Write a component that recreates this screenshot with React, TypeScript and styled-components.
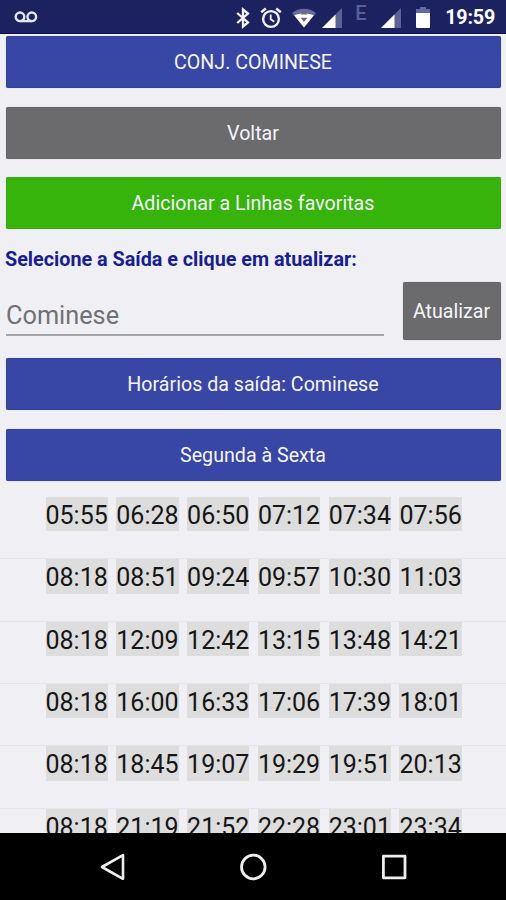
import React from 'react';
import styled, { createGlobalStyle } from 'styled-components';

const DEPARTURES = [
  ['05:55', '06:28', '06:50', '07:12', '07:34', '07:56'],
  ['08:18', '08:51', '09:24', '09:57', '10:30', '11:03'],
  ['08:18', '12:09', '12:42', '13:15', '13:48', '14:21'],
  ['08:18', '16:00', '16:33', '17:06', '17:39', '18:01'],
  ['08:18', '18:45', '19:07', '19:29', '19:51', '20:13'],
  ['08:18', '21:19', '21:52', '22:28', '23:01', '23:34'],
];

const VoicemailIcon = () => (
  <svg width="24" height="12" viewBox="0 0 24 12" fill="none" stroke="#e4e6f6" strokeWidth="2.4">
    <circle cx="6" cy="5.8" r="4.3" />
    <circle cx="17.8" cy="5.8" r="4.3" />
    <path d="M6 10.1H17.8" />
  </svg>
);

const BluetoothIcon = () => (
  <svg width="14" height="22" viewBox="0 0 14 22" fill="none" stroke="#f0f1fb" strokeWidth="2.3">
    <path d="M1.2 6L12 15.5L7 19.5V2.5L12 6.5L1.2 16" />
  </svg>
);

const AlarmIcon = () => (
  <svg width="22" height="22" viewBox="0 0 22 22" fill="none" stroke="#f0f1fb" strokeWidth="2.4">
    <circle cx="11" cy="12" r="7.9" />
    <path d="M1.2 5.3L5.8 1.5M20.8 5.3L16.2 1.5" />
    <path d="M10.7 7.5V12.3L14.3 14.8" strokeWidth="1.8" />
  </svg>
);

const WifiIcon = () => (
  <svg width="26" height="20" viewBox="0 0 26 20">
    <path d="M1 5.2C8 -0.6 18 -0.6 25 5.2L13 19.5Z" fill="#666b9d" />
    <path d="M3.2 7.2C9.5 4.9 16.5 4.9 22.8 7.2L13 19.5Z" fill="#fff" />
    <path d="M13 2.4L16.4 6.6H9.6ZM9.6 9.8H16.4L13 14Z" fill="#666b78" />
  </svg>
);

const SignalIcon = () => (
  <svg width="20" height="20" viewBox="0 0 20 20">
    <path d="M20 0V20H0Z" fill="#5c6297" />
    <path d="M13.5 6.5V20H0Z" fill="#fff" />
  </svg>
);

const BatteryIcon = () => (
  <svg width="14" height="21" viewBox="0 0 14 21">
    <path d="M4 0H10V2H14V7H0V2H4Z" fill="#666b9d" />
    <path d="M0 6H14V20Q14 21 13 21H1Q0 21 0 20Z" fill="#fff" />
  </svg>
);

const App = () => (
  <>
    <GlobalStyle />
    <Screen>
      <StatusBar>
        <VoicemailIcon />
        <StatusIcons>
          <BluetoothIcon />
          <AlarmIcon />
          <WifiIcon />
          <SignalIcon />
          <NetworkType>E</NetworkType>
          <SignalIcon />
          <BatteryIcon />
          <Clock>19:59</Clock>
        </StatusIcons>
      </StatusBar>
      <Content>
        <Actions>
          <Button $tone="blue">CONJ. COMINESE</Button>
          <Button $tone="gray">Voltar</Button>
          <Button $tone="green">Adicionar a Linhas favoritas</Button>
        </Actions>
        <Label>Selecione a Saída e clique em atualizar:</Label>
        <SelectRow>
          <Select>Cominese</Select>
          <UpdateButton $tone="gray">Atualizar</UpdateButton>
        </SelectRow>
        <Actions>
          <Button $tone="blue">Horários da saída: Cominese</Button>
          <Button $tone="blue">Segunda à Sexta</Button>
        </Actions>
        <Timetable>
          {DEPARTURES.map((row, i) => (
            <TimeRow key={i}>
              {row.map((time) => (
                <Time key={time}>{time}</Time>
              ))}
            </TimeRow>
          ))}
        </Timetable>
      </Content>
      <NavBar>
        <svg width="26" height="28" viewBox="0 0 26 28" fill="none" stroke="#eee" strokeWidth="2.6" strokeLinejoin="round">
          <path d="M3 14L24 2.2V25.8Z" />
        </svg>
        <svg width="28" height="28" viewBox="0 0 28 28" fill="none" stroke="#eee" strokeWidth="2.8">
          <circle cx="14.3" cy="14" r="11.8" />
        </svg>
        <svg width="26" height="28" viewBox="0 0 26 28" fill="none" stroke="#eee" strokeWidth="2.8" strokeLinejoin="round">
          <rect x="2.4" y="3.2" width="21.6" height="21.6" />
        </svg>
      </NavBar>
    </Screen>
  </>
);

const GlobalStyle = createGlobalStyle`
  * {
    box-sizing: border-box;
  }

  body {
    margin: 0;
    font-family: Roboto, sans-serif;
  }

  svg {
    display: block;
    flex-shrink: 0;
  }
`;

const Screen = styled.div`
  width: 506px;
  height: 900px;
  display: flex;
  flex-direction: column;
  overflow: hidden;
  background: #efeff4;
`;

const StatusBar = styled.header`
  height: 34px;
  flex-shrink: 0;
  display: flex;
  align-items: center;
  justify-content: space-between;
  padding: 0 11px 0 14px;
  background: #1c2260;
  border-bottom: 1px solid #0b0d50;
`;

const StatusIcons = styled.div`
  display: flex;
  align-items: center;
  padding-top: 2px;

  svg:nth-child(1) {
    margin-right: 10px;
  }

  svg:nth-child(2) {
    margin-right: 9px;
  }

  svg:nth-child(3) {
    margin-right: 5px;
  }

  svg:nth-child(6) {
    margin-right: 15px;
  }
`;

const NetworkType = styled.span`
  width: 39px;
  padding: 0 0 9px 13px;
  color: #595e96;
  font-size: 20px;
  font-weight: 500;
  line-height: 20px;
`;

const Clock = styled.span`
  margin: 1px 0 0 15px;
  color: #fff;
  font-size: 19.7px;
  font-weight: 700;
  letter-spacing: -0.2px;
  line-height: 22px;
`;

const Content = styled.main`
  flex: 1;
  min-height: 0;
  padding-top: 2.2px;
  overflow: hidden;
`;

const Actions = styled.div`
  display: flex;
  flex-direction: column;
  gap: 18.4px;
  padding: 0 5px 0 6px;
`;

const tones = {
  blue: { background: '#3846a5', border: '#343f9f' },
  gray: { background: '#6b6b6d', border: '#666668' },
  green: { background: '#36b40c', border: '#33ad0c' },
};

const Button = styled.button<{ $tone: keyof typeof tones }>`
  height: 52px;
  padding: 2px 1px 0 0;
  border: 1px solid ${({ $tone }) => tones[$tone].border};
  border-radius: 1.5px;
  background: ${({ $tone }) => tones[$tone].background};
  box-shadow: 0 0 1px rgba(0, 0, 0, 0.3);
  color: #f5f5fa;
  font-family: inherit;
  font-size: 19.65px;
  line-height: 24px;
`;

const UpdateButton = styled(Button)`
  width: 98px;
  height: 58px;
`;

const Label = styled.p`
  margin: 18.4px 0 9px;
  padding-left: 5px;
  color: #171d92;
  font-size: 19.75px;
  font-weight: 700;
  line-height: 26px;
`;

const SelectRow = styled.div`
  display: flex;
  justify-content: space-between;
  padding: 0 5px 0 6px;
  margin-bottom: 17.8px;
`;

const Select = styled.div`
  width: 378px;
  height: 54px;
  padding-top: 19px;
  border-bottom: 2px solid #a3a3a8;
  color: #717174;
  font-size: 25.3px;
  line-height: 30px;
`;

const Timetable = styled.div`
  padding-top: 16.2px;
`;

const TimeRow = styled.div`
  height: 62.4px;
  display: flex;
  align-items: flex-start;
  gap: 8.5px;
  padding-left: 45.5px;
  border-bottom: 1px solid #e4e4e9;
`;

const Time = styled.span`
  width: 62.3px;
  height: 34.5px;
  display: flex;
  justify-content: center;
  background: #dddddd;
  color: #161616;
  font-size: 25px;
  line-height: 38px;
`;

const NavBar = styled.nav`
  height: 67px;
  flex-shrink: 0;
  display: flex;
  align-items: center;
  justify-content: center;
  gap: 114px;
  background: #000;
`;

export default App;
